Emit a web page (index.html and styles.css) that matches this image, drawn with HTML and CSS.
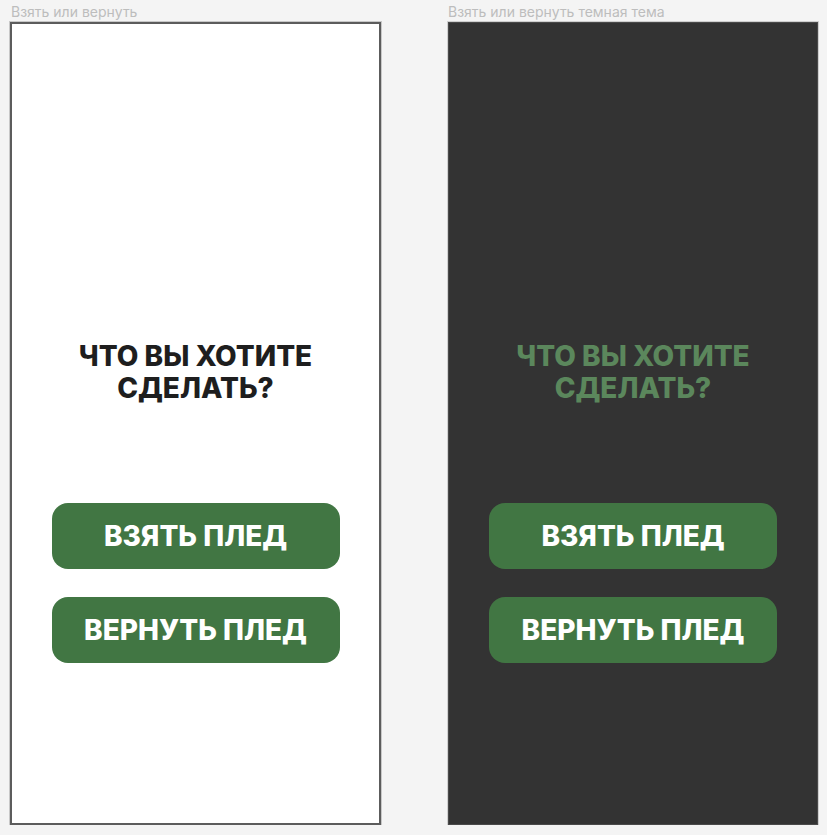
FILE: index.html
```html
<!DOCTYPE html>
<html lang="ru">
<head>
<meta charset="utf-8">
<title>Взять или вернуть</title>
<link rel="stylesheet" href="styles.css">
</head>
<body>
<div class="canvas">
  <section class="board">
    <div class="board-label">Взять или вернуть</div>
    <div class="frame frame-light">
      <h1 class="question">ЧТО ВЫ ХОТИТЕ<br>СДЕЛАТЬ?</h1>
      <div class="actions">
        <button class="btn">ВЗЯТЬ ПЛЕД</button>
        <button class="btn">ВЕРНУТЬ ПЛЕД</button>
      </div>
    </div>
  </section>
  <section class="board board-dark">
    <div class="board-label board-label-dark">Взять или вернуть темная тема</div>
    <div class="frame frame-dark">
      <h1 class="question question-dark">ЧТО ВЫ ХОТИТЕ<br>СДЕЛАТЬ?</h1>
      <div class="actions">
        <button class="btn">ВЗЯТЬ ПЛЕД</button>
        <button class="btn">ВЕРНУТЬ ПЛЕД</button>
      </div>
    </div>
  </section>
</div>
</body>
</html>
```

FILE: styles.css
```css
html, body {
  margin: 0;
  padding: 0;
  background: #f4f4f4;
  font-family: Inter, "Noto Sans", "Liberation Sans", sans-serif;
}

.canvas {
  display: flex;
  gap: 67px;
  padding: 4px 0 0 10px;
}

.board {
  display: flex;
  flex-direction: column;
}

.board-label {
  font-size: 14px;
  line-height: 16px;
  color: #bdbdbd;
  height: 18px;
  padding-left: 1px;
  white-space: nowrap;
}

.board-label-dark {
  padding-left: 0;
}

.frame {
  box-sizing: border-box;
  width: 371px;
  height: 803px;
  display: flex;
  flex-direction: column;
  align-items: center;
  padding-top: 316px;
}

.frame-light {
  background: #ffffff;
  border: 2px solid #5c5c5c;
  box-shadow: 0 0 0 1px #c8c8c8;
}

.frame-dark {
  width: 370px;
  padding-top: 317px;
  background: #333333;
  border: 1px solid #4a4a4a;
  box-shadow: 0 0 0 1px #cfcfcf;
}

.question {
  margin: 0;
  font-size: 28px;
  line-height: 32px;
  font-weight: 800;
  text-align: center;
  color: #1e1e1e;
  letter-spacing: 0;
}

.question-dark {
  color: #5b875c;
}

.actions {
  display: flex;
  flex-direction: column;
  gap: 28px;
  margin-top: 99px;
}

.btn {
  width: 288px;
  height: 66px;
  border: none;
  border-radius: 16px;
  background: #417643;
  color: #ffffff;
  font-family: Inter, "Noto Sans", "Liberation Sans", sans-serif;
  font-size: 28px;
  font-weight: 800;
  letter-spacing: 0;
  padding: 0;
}
```
